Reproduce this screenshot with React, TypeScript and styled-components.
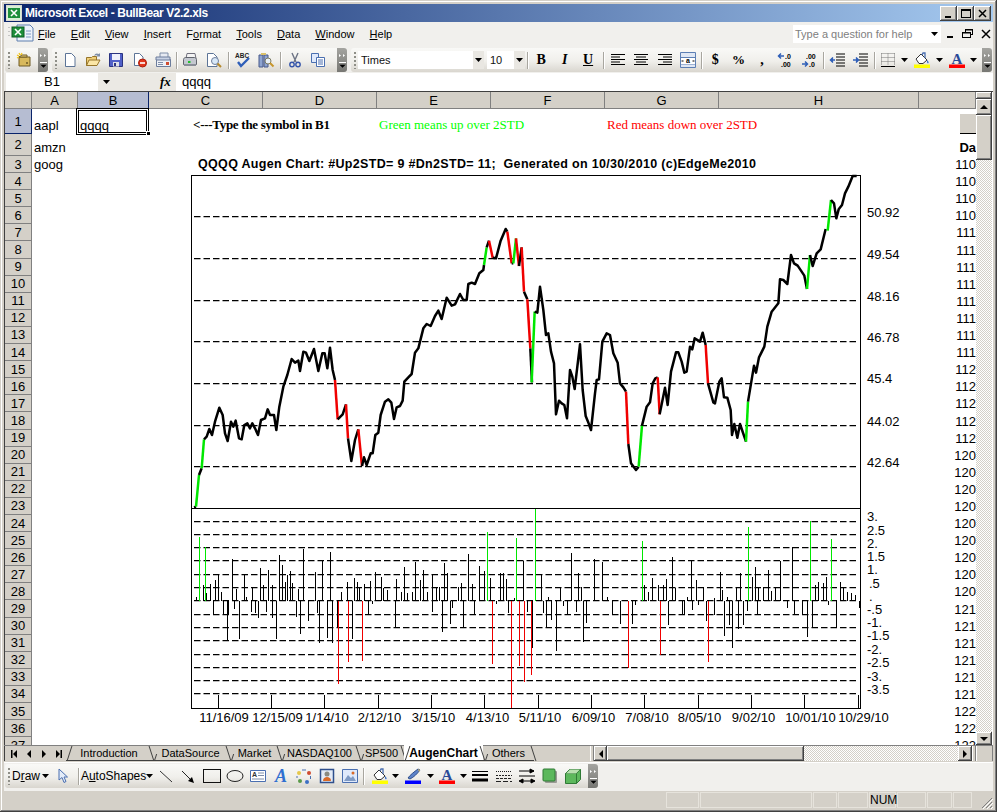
import * as React from 'react';
import styled, { createGlobalStyle } from 'styled-components';

const GlobalStyle = createGlobalStyle`
  html, body {
    margin: 0;
    padding: 0;
    background: #d4d0c8;
  }
  * { box-sizing: border-box; }
`;

const SANS = `"Liberation Sans", Arial, sans-serif`;
const SERIF = `"Liberation Serif", "Times New Roman", serif`;

const Frame = styled.div`
  width: 997px;
  height: 812px;
  padding: 4px 4px 3px 4px;
  display: flex;
  flex-direction: column;
  overflow: hidden;
  background: #d4d0c8;
  font-family: ${SANS};
  box-shadow: inset -1px -1px #404040, inset 1px 1px #d4d0c8, inset -2px -2px #808080, inset 2px 2px #fff;
`;

const TitleBar = styled.div`
  height: 18px;
  flex: none;
  display: flex;
  align-items: center;
  padding: 0 2px;
  background: linear-gradient(90deg, #0a246a, #a6caf0);
  color: #fff;
  font-size: 12px;
  font-weight: bold;
`;

const TitleText = styled.span`
  margin-left: 3px;
  flex: 1;
  letter-spacing: -0.4px;
`;

const WinBtn = styled.button`
  width: 17px;
  height: 15px;
  padding: 0;
  margin: 0;
  display: flex;
  align-items: center;
  justify-content: center;
  background: #d4d0c8;
  border: 0;
  box-shadow: inset -1px -1px #404040, inset 1px 1px #fff, inset -2px -2px #808080;
`;

const MenuBar = styled.div`
  height: 26px;
  flex: none;
  display: flex;
  align-items: center;
  padding-bottom: 2px;
  background: #f1f0ed;
  font-size: 11px;
  color: #000;
`;

const MenuIcon = styled.div`
  width: 34px;
  padding-left: 4px;
  flex: none;
`;

const MenuItems = styled.div`
  display: flex;
  flex: 1;
  gap: 15.1px;
`;

const HelpBox = styled.div`
  width: 148px;
  height: 18px;
  margin-right: 1px;
  display: flex;
  align-items: center;
  justify-content: space-between;
  padding: 0 3px 0 2px;
  background: #fff;
  color: #808080;
  font-size: 11px;
`;

const DocButtons = styled.div`
  width: 51px;
  display: flex;
  justify-content: space-between;
  padding: 0 2px 0 4px;
  align-items: center;
`;

const ToolRow = styled.div`
  height: 25px;
  flex: none;
  display: flex;
  gap: 4px;
  padding-left: 1px;
  background: #f1f0ed;
`;

const Segment = styled.div<{ $w: number }>`
  width: ${(p) => p.$w}px;
  height: 24px;
  flex: none;
  display: flex;
  align-items: center;
  border-radius: 3px;
  background: linear-gradient(#f9f9f7, #f0efeb 55%, #d9d6cf);
`;

const GripBox = styled.div`
  width: 3px;
  height: 17px;
  margin-left: 3px;
  flex: none;
  background: radial-gradient(circle at 1px 1px, #8f8f88 1px, transparent 1.2px) 0 0 / 3px 4px repeat-y;
`;

const Tool = styled.div<{ $w?: number; $pad?: number }>`
  width: ${(p) => p.$w ?? 23.4}px;
  height: 20px;
  flex: none;
  display: flex;
  align-items: center;
  justify-content: center;
  padding-left: ${(p) => p.$pad ?? 0}px;
  font-size: 12px;
  color: #000;
  & > * {
    flex: none;
  }
`;

const Sep = styled.div<{ $m?: number }>`
  width: 1px;
  height: 17px;
  margin: 0 ${(p) => p.$m ?? 1.3}px;
  flex: none;
  background: #a8a69f;
  box-shadow: 1px 0 #fff;
`;

const Spacer = styled.div`
  flex: 1;
`;

const MoreBtn = styled.div`
  width: 10px;
  height: 24px;
  flex: none;
  display: flex;
  align-items: flex-end;
  justify-content: center;
  padding-bottom: 3px;
  border-radius: 0 3px 3px 0;
  background: linear-gradient(#a4a4a0, #777773);
`;

const Combo = styled.div<{ $w: number; $mr: number; $ml?: number }>`
  width: ${(p) => p.$w}px;
  height: 18px;
  margin-left: ${(p) => p.$ml ?? 0}px;
  margin-right: ${(p) => p.$mr}px;
  flex: none;
  display: flex;
  align-items: center;
  justify-content: space-between;
  background: #fff;
  font-size: 11px;
  padding-left: 3px;
  color: #111;
`;

const ComboArrow = styled.div`
  width: 11px;
  height: 18px;
  display: flex;
  align-items: center;
  justify-content: center;
  background: #e9e7e2;
`;

const FormulaBar = styled.div`
  height: 18px;
  flex: none;
  display: flex;
  align-items: stretch;
  background: #ebe9e4;
  font-size: 13px;
`;

const NameBox = styled.div`
  width: 92px;
  margin-left: 2px;
  background: #fff;
  text-align: center;
  line-height: 18px;
`;

const NameArrow = styled.div`
  width: 17px;
  display: flex;
  align-items: center;
  justify-content: center;
`;

const FxLabel = styled.div`
  width: 61px;
  padding-left: 45px;
  font-family: ${SERIF};
  font-style: italic;
  font-weight: bold;
  line-height: 17px;
`;

const FormulaInput = styled.div`
  flex: 1;
  background: #fff;
  padding-left: 6px;
  line-height: 18px;
`;

const SheetArea = styled.div`
  height: 654px;
  flex: none;
  display: flex;
  border-top: 1px solid #404040;
  border-left: 1px solid #404040;
  background: #fff;
`;

const Viewport = styled.div`
  width: 971px;
  position: relative;
  overflow: hidden;
  font-size: 13px;
`;

const SheetRow = styled.div<{ $h: number }>`
  height: ${(p) => p.$h}px;
  display: grid;
  grid-template-columns: 27px 46px 71px 114px 114px 114px 114px 114px 200px 57px;
`;

const HeadCell = styled.div<{ $active?: boolean }>`
  display: flex;
  align-items: center;
  justify-content: center;
  background: ${(p) => (p.$active ? '#b6bdd2' : '#d4d0c8')};
  border-right: 1px solid ${(p) => (p.$active ? '#0a246a' : '#808080')};
  border-bottom: 1px solid ${(p) => (p.$active ? '#0a246a' : '#808080')};
  color: #000;
`;

const Cell = styled.div<{ $indent?: number }>`
  display: flex;
  align-items: flex-end;
  padding-left: ${(p) => p.$indent ?? 2}px;
  line-height: 16px;
  white-space: nowrap;
  color: #000;
`;

const NoteText = styled.span<{ $color?: string; $bold?: boolean }>`
  font-family: ${SERIF};
  font-size: 13px;
  line-height: 18px;
  color: ${(p) => p.$color ?? '#000'};
  font-weight: ${(p) => (p.$bold ? 'bold' : 'normal')};
  letter-spacing: ${(p) => (p.$bold ? '-0.28px' : '0')};
`;

const SelectedCell = styled(Cell)`
  position: relative;
  &::after {
    content: '';
    position: absolute;
    left: -2px;
    top: -1px;
    right: 0;
    bottom: -1px;
    border: 3px double #000;
  }
`;

const FillHandle = styled.div`
  position: absolute;
  right: -2px;
  bottom: -2px;
  width: 5px;
  height: 5px;
  background: #000;
  border: 1px solid #fff;
  z-index: 1;
`;

const DataCell = styled.div<{ $bold?: boolean }>`
  display: flex;
  align-items: flex-end;
  justify-content: flex-end;
  line-height: 16px;
  font-weight: ${(p) => (p.$bold ? 'bold' : 'normal')};
  color: #000;
`;

const ListHeader = styled.div`
  width: 16px;
  height: 20px;
  background: #d4d0c8;
  border-bottom: 1px solid #000;
`;

const ChartSvg = styled.svg`
  position: absolute;
  left: 181px;
  top: 63px;
  width: 720px;
  height: 570px;
  font-family: ${SANS};
`;

const VScroll = styled.div`
  width: 16px;
  flex: none;
  display: flex;
  flex-direction: column;
`;

const ScrollBtn = styled.div<{ $w?: number; $h?: number }>`
  width: ${(p) => (p.$w ? `${p.$w}px` : 'auto')};
  height: ${(p) => (p.$h ? `${p.$h}px` : 'auto')};
  flex: none;
  display: flex;
  align-items: center;
  justify-content: center;
  background: #d4d0c8;
  box-shadow: inset -1px -1px #404040, inset 1px 1px #fff, inset -2px -2px #808080;
`;

const ScrollTrack = styled.div`
  flex: 1;
  background: conic-gradient(#fff 25%, #d4d0c8 0 50%, #fff 0 75%, #d4d0c8 0) 0 0 / 2px 2px;
`;

const TabRow = styled.div`
  height: 16px;
  flex: none;
  display: flex;
  align-items: stretch;
  border-top: 1px solid #808080;
  background: #d4d0c8;
`;

const TabNav = styled.div`
  width: 62px;
  flex: none;
  display: flex;
  align-items: center;
  padding-left: 1px;
  border-left: 1px solid #404040;
`;

const NavBtn = styled.div`
  width: 16px;
  display: flex;
  justify-content: center;
`;

const TabStrip = styled.div`
  width: 524px;
  flex: none;
  display: flex;
`;

const Tab = styled.div<{ $w: number; $active?: boolean; $first?: boolean }>`
  width: ${(p) => p.$w}px;
  flex: none;
  position: relative;
  text-align: center;
  font-size: ${(p) => (p.$active ? 12 : 11)}px;
  line-height: 15px;
  margin-top: -1px;
  height: 16px;
  font-weight: ${(p) => (p.$active ? 'bold' : 'normal')};
  background: ${(p) => (p.$active ? '#fff' : 'transparent')};
  border-bottom: 1px solid #404040;
  border-top: 1px solid ${(p) => (p.$active ? '#fff' : '#808080')};
  color: #000;
  z-index: ${(p) => (p.$active ? 2 : 1)};
  &::before,
  &::after {
    content: '';
    position: absolute;
    bottom: -1px;
    width: 1px;
    background: #404040;
  }
  &::before {
    top: ${(p) => (p.$first || p.$active ? 0 : 8)}px;
    left: 3px;
    transform: skewX(-18deg);
  }
  &::after {
    top: 0;
    right: 0;
    transform: skewX(-342deg) scaleX(1);
  }
`;

const SplitBar = styled.div<{ $w: number }>`
  width: ${(p) => p.$w}px;
  flex: none;
  background: #d4d0c8;
  border-left: 1px solid #fff;
  border-right: 1px solid #808080;
`;

const Thumb = styled(ScrollBtn)`
  flex: none;
`;

const HTrack = styled(ScrollTrack)`
  flex: 1;
`;

const BottomDock = styled.div`
  flex: none;
  height: 29px;
  padding: 1px 0 1px 1px;
  margin-top: 1px;
  border-top: 1px solid #fff;
  background: #f1f0ed;
  display: flex;
`;

const StatusBar = styled.div`
  flex: 1;
  display: flex;
  justify-content: flex-end;
  align-items: center;
  gap: 1px;
  padding-right: 21px;
  padding-bottom: 1px;
  position: relative;
`;

const StatusPanel = styled.div<{ $w: number }>`
  width: ${(p) => p.$w}px;
  height: 16px;
  border: 1px solid #e6e3dc;
  font-size: 12px;
  line-height: 15px;
  text-align: center;
  color: #000;
`;

const SizeGrip = styled.svg`
  position: absolute;
  right: 0;
  bottom: 0;
`;

const Glyph = styled.svg`
  width: 16px;
  height: 16px;
  display: block;
  overflow: visible;
`;

const SymbolText = styled.span<{ $style?: string; $size?: number; $line?: boolean }>`
  font-family: ${SERIF};
  font-weight: bold;
  font-size: ${(p) => p.$size ?? 14}px;
  font-style: ${(p) => p.$style ?? 'normal'};
  text-decoration: ${(p) => (p.$line ? 'underline' : 'none')};
`;

const Ico = ({ children }: { children: React.ReactNode }) => (
  <Glyph viewBox="0 0 16 16">{children}</Glyph>
);

const DownArrow = () => (
  <svg width="7" height="4" viewBox="0 0 7 4"><path d="M0 0h7L3.5 4z" fill="#000" /></svg>
);

const Page = ({ x = 3, y = 1, w = 10, h = 14 }: { x?: number; y?: number; w?: number; h?: number }) => (
  <path
    d={`M${x + 0.5} ${y + 0.5}h${w - 4}l3.5 3.5V${y + h - 0.5}H${x + 0.5}z`}
    fill="#fff"
    stroke="#5c7497"
  />
);

const Lines = ({ rows }: { rows: [number, number][] }) => (
  <g stroke="#000" strokeWidth="1">
    {rows.map(([x, w], i) => (
      <path key={i} d={`M${x} ${2.5 + i * 2.5}h${w}`} />
    ))}
  </g>
);

const icons = {
  excel: (
    <svg width="26" height="18" viewBox="0 0 26 18">
      <path d="M9 1h13l3 3v13H9z" fill="#eef3fb" stroke="#5f7fae" />
      <rect x="4" y="3" width="12" height="10" fill="#1e8f3b" stroke="#0d5a24" />
      <path d="M7 5l6 6M13 5l-6 6" stroke="#fff" strokeWidth="1.6" />
      <path d="M18 7h5M18 10h5M18 13h5" stroke="#7f9ac4" />
      <path d="M1 3v1M1 7v1M1 11v1" stroke="#999" />
    </svg>
  ),
  titleLogo: (
    <svg width="16" height="16" viewBox="0 0 16 16">
      <rect x="0.5" y="0.5" width="15" height="15" fill="#d9f0d6" stroke="#d8d8d0" />
      <rect x="2" y="3" width="12" height="10" fill="#1e8f3b" />
      <path d="M5 5l6 6M11 5l-6 6" stroke="#fff" strokeWidth="1.6" />
    </svg>
  ),
  fresh: (
    <Ico>
      <path d="M3 5h11v9H3z" fill="#d8b95c" stroke="#6e5a24" />
      <path d="M3 5l3-2h5v2z" fill="#e9d184" stroke="#6e5a24" />
      <path d="M3 1l1 2M1 3l2 1M6 1L5 3M1 6l2-1" stroke="#f2c318" strokeWidth="1.3" />
      <circle cx="11" cy="11" r="1" fill="#6e5a24" />
    </Ico>
  ),
  newDoc: <Ico><Page /></Ico>,
  open: (
    <Ico>
      <path d="M1.5 13.5V5.5h5l1-1h4v9z" fill="#f0cf78" stroke="#96752a" />
      <path d="M1.5 13.5L4 8h11l-3 5.5z" fill="#fbe6a6" stroke="#96752a" />
      <path d="M9 4c1-3 3-3 5-2l1-1v3.500h-3.500l1-1c-1-.5-2.500-.5-3.500.5z" fill="#7f8fa8" />
    </Ico>
  ),
  save: (
    <Ico>
      <path d="M1.500 1.500h13v13h-13z" fill="#5060c8" stroke="#2a3380" />
      <rect x="4" y="2" width="8" height="6" fill="#eef0fb" />
      <rect x="5" y="10" width="6" height="4.500" fill="#dfe0e8" />
      <rect x="6" y="11" width="2" height="3" fill="#2a3380" />
    </Ico>
  ),
  permission: (
    <Ico>
      <Page x={2} w={9} h={13} />
      <circle cx="10.500" cy="11" r="4" fill="#e2361c" stroke="#a81e0c" />
      <path d="M8 11h5" stroke="#fff" strokeWidth="1.600" />
    </Ico>
  ),
  mail: (
    <Ico>
      <path d="M5 1h8v6H5z" fill="#e6eaf2" stroke="#7f8ea8" />
      <path d="M1.500 7.500h14v7h-14z" fill="#eef1f7" stroke="#6c7d9c" />
      <path d="M1 5h14v3H1z" fill="#c8d2e4" stroke="#6c7d9c" />
      <path d="M3 10.500h5M3 12.500h5" stroke="#7f8ea8" />
      <rect x="11" y="10" width="3" height="3" fill="#d04c30" />
    </Ico>
  ),
  print: (
    <Ico>
      <path d="M5 1.500h8l1 5H4z" fill="#f4f4f4" stroke="#70707c" />
      <path d="M1.500 7.500c0-1 1-2 2-2h9c1 0 2 1 2 2v5h-13z" fill="#c4c8d0" stroke="#60646c" />
      <path d="M2 12h12v2H2z" fill="#8a8e98" />
      <rect x="6" y="9" width="2.500" height="2" fill="#22c02e" />
    </Ico>
  ),
  preview: (
    <Ico>
      <Page x={1} w={10} h={14} />
      <circle cx="9" cy="9" r="3.500" fill="#d8e8f8" stroke="#6c7d9c" />
      <path d="M11.500 11.500l3.500 3.500" stroke="#b58a2c" strokeWidth="2" />
    </Ico>
  ),
  spell: (
    <Ico>
      <text x="0" y="6" fontFamily={SANS} fontSize="6.500" fontWeight="bold" fill="#222">ABC</text>
      <path d="M3 10l3 4 8-8" fill="none" stroke="#2f5fb8" strokeWidth="2.400" />
    </Ico>
  ),
  research: (
    <Ico>
      <path d="M1 3h4v12H1zM6 3h4v12H6z" fill="#8ea4d0" stroke="#47598a" />
      <path d="M3 1h5v2H3z" fill="#d9c06a" />
      <circle cx="10" cy="9" r="3" fill="#e8f0f8" stroke="#7a7a62" />
      <path d="M12 11l3.500 3.500" stroke="#c7962c" strokeWidth="2" />
    </Ico>
  ),
  cut: (
    <Ico>
      <path d="M5 1l4 9M11 1L7 10" stroke="#6c7384" strokeWidth="1.400" fill="none" />
      <circle cx="5" cy="12.500" r="2.200" fill="none" stroke="#3555aa" strokeWidth="1.400" />
      <circle cx="11" cy="12.500" r="2.200" fill="none" stroke="#3555aa" strokeWidth="1.400" />
    </Ico>
  ),
  copy: (
    <Ico>
      <path d="M1.500 1.500h7v9h-7z" fill="#dfe9fb" stroke="#4a6fb0" />
      <path d="M6.500 5.500h8v9h-8z" fill="#fff" stroke="#4a6fb0" />
      <path d="M8 8h5M8 10h5M8 12h5" stroke="#4a6fb0" />
    </Ico>
  ),
  alignLeft: <Ico><Lines rows={[[1, 14], [1, 9], [1, 14], [1, 9], [1, 14]]} /></Ico>,
  alignCenter: <Ico><Lines rows={[[1, 14], [3, 10], [1, 14], [3, 10], [1, 14]]} /></Ico>,
  alignRight: <Ico><Lines rows={[[1, 14], [6, 9], [1, 14], [6, 9], [1, 14]]} /></Ico>,
  merge: (
    <Ico>
      <path d="M.500 .500h15v15H.500z" fill="#dfe7f4" stroke="#5c7fb4" />
      <path d="M.500 5.500h15M.500 12h15" stroke="#5c7fb4" />
      <rect x="1" y="6" width="14" height="6" fill="#fff" />
      <text x="8" y="11.300" textAnchor="middle" fontFamily={SANS} fontSize="7" fontWeight="bold">a</text>
      <path d="M1.500 9h2M14.500 9h-2" stroke="#000" />
    </Ico>
  ),
  incDec: (
    <Ico>
      <text x="8" y="7" fontFamily={SANS} fontSize="7" fontWeight="bold">.0</text>
      <text x="4" y="15" fontFamily={SANS} fontSize="7" fontWeight="bold">.00</text>
      <path d="M7 4H2M4 1.500L1.500 4 4 6.500" stroke="#2f5fb8" strokeWidth="1.500" fill="none" />
    </Ico>
  ),
  decDec: (
    <Ico>
      <text x="5" y="7" fontFamily={SANS} fontSize="7" fontWeight="bold">.00</text>
      <text x="8" y="15" fontFamily={SANS} fontSize="7" fontWeight="bold">.0</text>
      <path d="M1 12h5M4 9.500L6.500 12 4 14.500" stroke="#2f5fb8" strokeWidth="1.500" fill="none" />
    </Ico>
  ),
  outdent: (
    <Ico>
      <path d="M6 2h9M6 5h9M6 8h9M6 11h9M6 14h9" stroke="#000" />
      <path d="M5 8H1M3 5.500L.500 8 3 10.500" stroke="#2f5fb8" strokeWidth="1.500" fill="#2f5fb8" />
    </Ico>
  ),
  indent: (
    <Ico>
      <path d="M6 2h9M6 5h9M6 8h9M6 11h9M6 14h9" stroke="#000" />
      <path d="M0 8h4M3 5.500L5.500 8 3 10.500" stroke="#2f5fb8" strokeWidth="1.500" fill="#2f5fb8" />
    </Ico>
  ),
  borders: (
    <Ico>
      <path d="M1.500 1.500h13M1.500 5.500h13M1.500 9.500h13M1.500 1.500v12M8 1.500v12M14.500 1.500v12" stroke="#777" strokeDasharray="1 1" />
      <path d="M1 14.500h14" stroke="#000" />
    </Ico>
  ),
  fill: (
    <Ico>
      <path d="M2 7l5-5 6 6-4 3.500H5z" fill="#fff" stroke="#333" />
      <path d="M8 3l1-2 2 0v5" fill="none" stroke="#4a6fb0" strokeWidth="1.300" />
      <path d="M13 8c1 1 2 2 1.500 3-.5.800-2 .3-1.500-3z" fill="#3b6fc4" />
      <rect x="0" y="12.500" width="16" height="3.500" fill="#ffff00" />
    </Ico>
  ),
  pen: (
    <Ico>
      <path d="M3 10c2-3 6-6 10-9l2 1c-3 4-6 7-10 9z" fill="#5c82c8" stroke="#2f4f8c" />
      <path d="M13 1l2 1-1 2z" fill="#d8b95c" />
      <rect x="0" y="12.500" width="16" height="3.500" fill="#0000ff" />
    </Ico>
  ),
  fontColor: (
    <Ico>
      <text x="8" y="11.500" textAnchor="middle" fontFamily={SERIF} fontSize="15" fontWeight="bold" fill="#2a4a98">A</text>
      <rect x="0" y="12.500" width="16" height="3.500" fill="#ff0000" />
    </Ico>
  ),
  pointer: (
    <Ico>
      <path d="M4 1v11l3-2.500 2 5 2-1-2-4.500h3.500z" fill="#e3ecf9" stroke="#4a6fb0" />
    </Ico>
  ),
  line: <Ico><path d="M2 3l12 11" stroke="#333" /></Ico>,
  arrow: <Ico><path d="M2 3l10 10" stroke="#222" /><path d="M14 15l-6-2 4-4z" fill="#000" /></Ico>,
  rect: <Ico><rect x="-.500" y="1.500" width="17" height="13" fill="none" stroke="#111" /></Ico>,
  ellipse: <Ico><ellipse cx="8" cy="8" rx="8" ry="5.500" fill="none" stroke="#222" /></Ico>,
  textBox: (
    <Ico>
      <path d="M.500 2.500h15v11H.500z" fill="#fff" stroke="#4a6fb0" />
      <text x="2" y="9" fontFamily={SANS} fontSize="7" fontWeight="bold" fill="#333">A</text>
      <path d="M8 5h6M8 7.500h6M2 11h12" stroke="#7f8ea8" />
    </Ico>
  ),
  wordArt: (
    <Ico>
      <text x="8" y="14" textAnchor="middle" fontFamily={SERIF} fontSize="18" fontStyle="italic" fontWeight="bold" fill="#2f6fd0">A</text>
    </Ico>
  ),
  diagram: (
    <Ico>
      <circle cx="3" cy="5" r="2" fill="#e6c84a" />
      <circle cx="13" cy="5" r="2" fill="#d04c30" />
      <circle cx="4" cy="13" r="2" fill="#5a9a48" />
      <circle cx="11" cy="14" r="2" fill="#3b6fc4" />
      <path d="M6 2h4M14.500 8v3M1 8v2" stroke="#4a6fb0" />
    </Ico>
  ),
  clipArt: (
    <Ico>
      <path d="M1.500 1.500h13v13h-13z" fill="#e4ebf6" stroke="#2f4f8c" strokeWidth="1.500" />
      <circle cx="8" cy="6" r="2.500" fill="#8a8a80" />
      <path d="M4 13c0-3 2-4 4-4s4 1 4 4z" fill="#d96a28" />
    </Ico>
  ),
  picture: (
    <Ico>
      <path d="M.500 1.500h15v13H.500z" fill="#dfe9fb" stroke="#4a6fb0" />
      <path d="M2 13l4-6 3 3 2-2 3 5z" fill="#7f9ac4" />
      <circle cx="11" cy="5" r="1.500" fill="#d96a28" />
    </Ico>
  ),
  lineStyle: <Ico><path d="M0 3.500h16" stroke="#000" /><path d="M0 7h16" stroke="#000" strokeWidth="2" /><path d="M0 12h16" stroke="#000" strokeWidth="3" /></Ico>,
  dashStyle: (
    <Ico>
      <path d="M0 3.500h16" stroke="#222" strokeDasharray="1 1" />
      <path d="M0 7.500h16" stroke="#222" strokeDasharray="2 1" />
      <path d="M0 10.500h16" stroke="#222" strokeDasharray="3 1" />
      <path d="M0 13.500h16" stroke="#222" strokeDasharray="5 2" />
    </Ico>
  ),
  arrowStyle: (
    <Ico>
      <path d="M0 3h15M11 1l4 2-4 2z" stroke="#000" />
      <path d="M0 8h16" stroke="#000" />
      <path d="M1 13h14M4 11l-4 2 4 2zM12 11l4 2-4 2z" stroke="#000" />
    </Ico>
  ),
  shadow: (
    <Ico>
      <rect x="3" y="3" width="12" height="12" rx="1" fill="#9a9a94" />
      <rect x="1" y="1" width="12" height="12" rx="1" fill="#5cb85c" stroke="#2f7a35" />
    </Ico>
  ),
  cube: (
    <Ico>
      <path d="M.500 5.500l4-4h11v10l-4 4H.500z" fill="#5cb85c" stroke="#2f7a35" />
      <path d="M.500 5.500h11v10M11.500 5.500l4-4" fill="none" stroke="#2f7a35" />
      <path d="M1 5.500l4-4h10l-4 4z" fill="#b8e0b0" />
    </Ico>
  ),
};

const MoreGlyph = () => (
  <svg width="7" height="16" viewBox="0 0 7 16">
    <path d="M0 1l2 1.500L0 4zM4 1l2 1.500L4 4z" fill="#fff" />
    <path d="M0 9h7v1H0zM0 11.500h7L3.500 15z" fill="#fff" />
    <path d="M0 11.500h7L3.500 15z" fill="#000" />
  </svg>
);

/* price line: runs traced off the picture, x/y in picture pixels */
type Run = { c: string; pts: [number, number][] };

const fromLeft = (p: number[]) => p.reduce<[number, number][]>((acc, v, i) => {
  if (i % 2 === 0) acc.push([190 + v / 3, 170 + p[i + 1] / 3]);
  return acc;
}, []);
const fromRight = (p: number[]) => p.reduce<[number, number][]>((acc, v, i) => {
  if (i % 2 === 0) acc.push([530 + v / 3, 170 + p[i + 1] / 3]);
  return acc;
}, []);

const G = '#00e800';
const R = '#f00000';
const K = '#000';

const priceRuns: Run[] = [
  { c: K, pts: fromLeft([12, 1012, 18, 1010]) },
  { c: G, pts: fromLeft([18, 1010, 27, 915]) },
  { c: K, pts: fromLeft([27, 915, 35, 895]) },
  { c: G, pts: fromLeft([35, 895, 42, 808]) },
  { c: K, pts: fromLeft([42, 808, 50, 800, 58, 777, 66, 795, 75, 755, 88, 713, 98, 735, 105, 790, 113, 813, 123, 755, 130, 770, 137, 752, 147, 805, 155, 808, 163, 765, 172, 760, 180, 775, 187, 760, 195, 775, 204, 795, 213, 750, 225, 745, 233, 718, 240, 735, 252, 735, 259, 780, 268, 710, 280, 650, 292, 615, 305, 567, 315, 578, 325, 572, 330, 603, 340, 545, 348, 548, 358, 573, 372, 537, 385, 603, 397, 550, 404, 550, 412, 595, 420, 533, 428, 600, 435, 630]) },
  { c: R, pts: fromLeft([435, 630, 443, 748]) },
  { c: K, pts: fromLeft([443, 748, 458, 733, 468, 703]) },
  { c: R, pts: fromLeft([468, 703, 474, 805]) },
  { c: K, pts: fromLeft([474, 805, 484, 873, 495, 810, 505, 778]) },
  { c: R, pts: fromLeft([505, 778, 516, 888]) },
  { c: K, pts: fromLeft([516, 888, 522, 862, 530, 885, 542, 850, 548, 850, 556, 795, 565, 788, 572, 735, 585, 695, 595, 688, 604, 698, 612, 747, 620, 712, 630, 708, 638, 692, 643, 635, 655, 622, 665, 612, 675, 548, 685, 535, 700, 475, 710, 462, 722, 468, 735, 438, 745, 422, 755, 447, 770, 383, 785, 407, 795, 403, 810, 372, 820, 390, 830, 390, 835, 342, 845, 338, 855, 342, 868, 310, 880, 300, 882, 285]) },
  { c: G, pts: fromLeft([882, 285, 890, 232]) },
  { c: K, pts: fromLeft([890, 232, 897, 212]) },
  { c: R, pts: fromLeft([897, 212, 908, 263]) },
  { c: K, pts: fromLeft([908, 263, 918, 265, 932, 212, 947, 177, 952, 185]) },
  { c: R, pts: fromLeft([952, 185, 965, 280]) },
  { c: K, pts: fromLeft([965, 280, 970, 280]) },
  { c: G, pts: fromLeft([970, 280, 978, 205]) },
  { c: R, pts: fromLeft([978, 205, 987, 288]) },
  { c: K, pts: fromLeft([987, 288, 995, 232]) },
  { c: R, pts: fromLeft([995, 232, 1002, 365]) },
  { c: K, pts: fromLeft([1002, 365, 1012, 388]) },
  { c: R, pts: fromLeft([1012, 388, 1021, 535]) },
  { c: K, pts: fromLeft([1021, 535, 1026, 637]) },
  { c: G, pts: fromRight([5, 637, 14, 425]) },
  { c: K, pts: fromRight([14, 425, 22, 428, 30, 350, 40, 420, 48, 495, 55, 490, 63, 545, 72, 580, 78, 733, 87, 692, 95, 700, 103, 705, 111, 745, 120, 600, 127, 620, 134, 657, 150, 523, 158, 660, 167, 738, 174, 755, 183, 780, 195, 670, 200, 630, 207, 628, 217, 515, 230, 490, 240, 495, 250, 550, 263, 578, 270, 640, 280, 652, 288, 665]) },
  { c: R, pts: fromRight([288, 665, 295, 822]) },
  { c: K, pts: fromRight([295, 822, 303, 880, 318, 900, 326, 890]) },
  { c: G, pts: fromRight([326, 890, 336, 767]) },
  { c: K, pts: fromRight([336, 767, 350, 710, 360, 697, 368, 640, 376, 625, 383, 622]) },
  { c: R, pts: fromRight([383, 622, 389, 733]) },
  { c: K, pts: fromRight([389, 733, 405, 653, 413, 705, 423, 605, 438, 547, 445, 547, 455, 575, 463, 608, 470, 605, 480, 530, 487, 538, 494, 505, 510, 515, 518, 488, 527, 525]) },
  { c: R, pts: fromRight([527, 525, 534, 640]) },
  { c: K, pts: fromRight([534, 640, 550, 697, 555, 700, 568, 635, 575, 625, 582, 682, 592, 683, 602, 720, 606, 795, 613, 762, 622, 803, 630, 762, 648, 815]) },
  { c: G, pts: fromRight([648, 815, 654, 695]) },
  { c: K, pts: fromRight([654, 695, 672, 587, 678, 608, 687, 562, 703, 530, 712, 470, 725, 425, 745, 400, 750, 328, 760, 330, 772, 342, 783, 255, 792, 280, 803, 287, 823, 317, 831, 357]) },
  { c: G, pts: fromRight([831, 357, 840, 255]) },
  { c: K, pts: fromRight([840, 255, 848, 288, 860, 250, 872, 238, 887, 177]) },
  { c: G, pts: fromRight([893, 182, 903, 90]) },
  { c: K, pts: fromRight([903, 90, 912, 100, 919, 145, 926, 118, 936, 105, 945, 70, 955, 50, 968, 18, 980, 18]) },
];

/* volume bars as pairs of x, end y, read from the left and right crops */
const blackLeft = [18, 275, 38, 240, 48, 265, 61, 238, 76, 225, 85, 208, 92, 262, 125, 163, 139, 253, 163, 208, 168, 275, 187, 248, 211, 190, 220, 240, 235, 195, 246, 240, 268, 150, 276, 180, 284, 232, 292, 210, 300, 197, 306, 235, 325, 252, 340, 133, 375, 200, 397, 168, 420, 142, 452, 262, 470, 230, 493, 218, 500, 232, 508, 250, 523, 238, 541, 228, 556, 202, 572, 215, 580, 250, 590, 255, 618, 222, 634, 260, 643, 185, 652, 265, 667, 262, 676, 170, 690, 225, 700, 195, 712, 262, 727, 210, 738, 250, 748, 245, 763, 175, 772, 205, 805, 245, 812, 235, 835, 148, 845, 238, 868, 183, 882, 197, 901, 218, 930, 205, 938, 205, 948, 222, 972, 280, 998, 168, 68, 330, 100, 327, 110, 407, 115, 327, 133, 312, 148, 403, 182, 322, 195, 325, 205, 340, 229, 320, 245, 340, 259, 403, 317, 335, 331, 388, 355, 347, 380, 325, 388, 415, 412, 398, 427, 415, 440, 367, 485, 402, 533, 330, 547, 298, 614, 370, 725, 320, 757, 380, 781, 358, 787, 308, 820, 365, 853, 327, 917, 297, 955, 323, 1012, 322, 1027, 428];
const redLeft = [445, 538, 475, 472, 517, 467, 907, 478, 964, 610, 988, 482, 1003, 532, 1022, 510];
const greenLeft = [28, 97, 44, 125, 892, 80, 979, 100, 1036, 10];
const blackRight = [33, 208, 55, 275, 90, 245, 122, 145, 145, 203, 152, 245, 193, 163, 217, 172, 232, 275, 343, 240, 354, 262, 367, 218, 384, 240, 400, 240, 409, 222, 425, 157, 435, 250, 472, 275, 482, 167, 497, 225, 520, 245, 553, 280, 569, 202, 576, 255, 592, 277, 617, 248, 630, 203, 665, 215, 674, 187, 685, 245, 700, 247, 713, 195, 722, 258, 735, 250, 751, 167, 785, 127, 855, 240, 863, 230, 878, 235, 888, 215, 930, 230, 940, 245, 952, 260, 964, 265, 976, 270, 39, 323, 47, 365, 63, 345, 79, 437, 98, 302, 112, 328, 138, 322, 160, 410, 169, 353, 247, 328, 271, 358, 305, 358, 315, 300, 415, 360, 457, 330, 463, 330, 487, 315, 505, 300, 529, 347, 553, 330, 583, 392, 597, 360, 607, 430, 624, 373, 640, 360, 650, 318, 680, 328, 771, 308, 792, 330, 816, 330, 832, 395, 847, 367, 895, 300, 919, 365, 987, 308];
const redRight = [295, 490, 391, 450, 535, 472];
const greenRight = [337, 108, 655, 67, 841, 47, 904, 103];

const ZERO = 600.5;
const barPath = (pairs: number[], originX: number) => {
  let d = '';
  for (let i = 0; i < pairs.length; i += 2) {
    const x = Math.round(originX + pairs[i] / 3) + 0.5;
    d += `M${x} ${ZERO}V${505 + pairs[i + 1] / 3}`;
  }
  return d;
};

const upperGrid = [216.7, 258.7, 300.7, 341.7, 383.7, 425.7, 466.7];
const upperLabels: [string, number][] = [['50.92', 212], ['49.54', 254], ['48.16', 296], ['46.78', 337], ['45.4', 378], ['44.02', 421], ['42.64', 462]];
const lowerGrid = [521.7, 534.7, 547.7, 560.7, 574.7, 587.7, 600.7, 614.7, 627.7, 640.7, 654.7, 667.7, 680.7, 693.7];
const lowerLabels: [string, number, number][] = [['3.', 516, 867], ['2.5', 530, 867], ['2.', 543, 867], ['1.5', 556, 867], ['1.', 569, 867], ['.5', 583, 869], ['.', 596, 869], ['-.5', 609, 867], ['-1.', 622, 867], ['-1.5', 635, 867], ['-2.', 649, 867], ['-2.5', 662, 867], ['-3.', 676, 867], ['-3.5', 689, 867]];
const ticks = [218, 271, 324, 378, 431, 484, 538, 591, 644, 698, 751, 804, 858];
const dates: [string, number][] = [['11/16/09', 224], ['12/15/09', 277.5], ['1/14/10', 327], ['2/12/10', 379.5], ['3/15/10', 433.5], ['4/13/10', 487.5], ['5/11/10', 540], ['6/09/10', 593.5], ['7/08/10', 647], ['8/05/10', 699.5], ['9/02/10', 753.5], ['10/01/10', 810.5], ['10/29/10', 863.5]];

function AugenChart() {
  return (
    <ChartSvg viewBox="186 155 720 570">
      <text x="198" y="168" fontSize="12.500" fontWeight="bold" textLength="558" style={{ whiteSpace: 'pre' }}>
        QQQQ Augen Chart: #Up2STD= 9 #Dn2STD= 11;  Generated on 10/30/2010 (c)EdgeMe2010
      </text>
      <g stroke="#000" strokeWidth="1.200" strokeDasharray="6.500 3" fill="none">
        {upperGrid.concat(lowerGrid).map((y) => (
          <path key={y} d={`M194 ${y}H859`} />
        ))}
      </g>
      <g fill="none" shapeRendering="crispEdges">
        <path d={barPath(blackLeft, 190) + barPath(blackRight, 530)} stroke="#000" />
        <path d={barPath(redLeft, 190) + barPath(redRight, 530)} stroke="#f00000" />
        <path d={barPath(greenLeft, 190) + barPath(greenRight, 530)} stroke="#00e800" />
        <path d={ticks.map((x) => `M${x + 0.5} 695V708`).join('')} stroke="#000" />
        <path d="M191.500 175.500H860.500V708.500H191.500zM191.500 508.500H860.500" stroke="#000" />
      </g>
      <g fill="none" strokeWidth="2.500" strokeLinejoin="round" strokeLinecap="butt">
        {priceRuns.map((run, i) => (
          <polyline key={i} stroke={run.c} points={run.pts.map((p) => p.join(',')).join(' ')} />
        ))}
      </g>
      <g fontSize="13" fill="#000">
        {upperLabels.map(([t, y]) => (
          <text key={t} x="867" y={y + 4.5}>{t}</text>
        ))}
        {lowerLabels.map(([t, y, x]) => (
          <text key={t} x={x} y={y + 5}>{t}</text>
        ))}
        {dates.map(([t, x]) => (
          <text key={t} x={x} y="722" textAnchor="middle">{t}</text>
        ))}
      </g>
    </ChartSvg>
  );
}

const columns = ['A', 'B', 'C', 'D', 'E', 'F', 'G', 'H', ''];

const sideValue = (n: number) => {
  if (n <= 6) return '110';
  if (n <= 14) return '111';
  if (n <= 19) return '112';
  if (n <= 28) return '120';
  if (n <= 34) return '121';
  return '122';
};

const menus: [string, string][] = [['F', 'ile'], ['E', 'dit'], ['V', 'iew'], ['I', 'nsert'], ['', 'Format'], ['T', 'ools'], ['D', 'ata'], ['W', 'indow'], ['H', 'elp']];
const sheetTabs: [string, number][] = [['Introduction', 86], ['DataSource', 77], ['Market', 51], ['NASDAQ100', 79], ['SP500', 45], ['AugenChart', 79], ['Others', 51]];

const Triangle = ({ d }: { d: string }) => (
  <svg width="8" height="8" viewBox="0 0 8 8"><path d={d} fill="#000" /></svg>
);

export default function App() {
  const lowRows = Array.from({ length: 35 }, (_, i) => i + 3);
  return (
    <Frame>
      <GlobalStyle />
      <TitleBar>
        {icons.titleLogo}
        <TitleText>Microsoft Excel - BullBear V2.2.xls</TitleText>
        <WinBtn><svg width="9" height="9"><path d="M1 7h6v2H1z" /></svg></WinBtn>
        <WinBtn><svg width="10" height="9"><path d="M0 0h10v9H0zM1 2v6h8V2z" /></svg></WinBtn>
        <WinBtn><svg width="9" height="9"><path d="M1 1l7 7M8 1L1 8" stroke="#000" strokeWidth="1.500" /></svg></WinBtn>
      </TitleBar>

      <MenuBar>
        <MenuIcon>{icons.excel}</MenuIcon>
        <MenuItems>
          {menus.map(([key, rest]) => (
            <span key={key + rest}>
              {key ? <u>{key}</u> : <>F<u>o</u>rmat</>}
              {key ? rest : ''}
            </span>
          ))}
        </MenuItems>
        <HelpBox>
          Type a question for help
          <DownArrow />
        </HelpBox>
        <DocButtons>
          <svg width="8" height="8"><path d="M1 6h6v2H1z" /></svg>
          <svg width="11" height="10" viewBox="0 0 11 10"><path d="M3 0h8v6H9v3H0V3h3zM4 1.500V3h5v2h1V1.500zM1 4.500V8h7V4.500z" /></svg>
          <svg width="10" height="10"><path d="M1 1l8 8M9 1L1 9" stroke="#000" strokeWidth="1.500" /></svg>
        </DocButtons>
      </MenuBar>

      <ToolRow>
        <Segment $w={43}>
          <GripBox />
          <Tool $w={26}>{icons.fresh}</Tool>
          <Spacer />
          <MoreBtn><MoreGlyph /></MoreBtn>
        </Segment>
        <Segment $w={295}>
          <GripBox />
          <Tool>{icons.newDoc}</Tool>
          <Tool>{icons.open}</Tool>
          <Tool>{icons.save}</Tool>
          <Tool>{icons.permission}</Tool>
          <Tool>{icons.mail}</Tool>
          <Sep />
          <Tool>{icons.print}</Tool>
          <Tool>{icons.preview}</Tool>
          <Sep $m={2.3} />
          <Tool>{icons.spell}</Tool>
          <Tool>{icons.research}</Tool>
          <Sep $m={2.3} />
          <Tool>{icons.cut}</Tool>
          <Tool>{icons.copy}</Tool>
          <Spacer />
          <MoreBtn><MoreGlyph /></MoreBtn>
        </Segment>
        <Segment $w={641}>
          <GripBox />
          <Combo $w={126} $ml={1} $mr={3}>Times<ComboArrow><DownArrow /></ComboArrow></Combo>
          <Combo $w={38} $mr={1}>10<ComboArrow><DownArrow /></ComboArrow></Combo>
          <Sep />
          <Tool><SymbolText>B</SymbolText></Tool>
          <Tool><SymbolText $style="italic">I</SymbolText></Tool>
          <Tool><SymbolText $line>U</SymbolText></Tool>
          <Sep $m={2.8} />
          <Tool>{icons.alignLeft}</Tool>
          <Tool>{icons.alignCenter}</Tool>
          <Tool>{icons.alignRight}</Tool>
          <Tool>{icons.merge}</Tool>
          <Sep />
          <Tool><SymbolText>$</SymbolText></Tool>
          <Tool><SymbolText $size={13}>%</SymbolText></Tool>
          <Tool><SymbolText>,</SymbolText></Tool>
          <Tool>{icons.incDec}</Tool>
          <Tool>{icons.decDec}</Tool>
          <Sep $m={2.3} />
          <Tool>{icons.outdent}</Tool>
          <Tool>{icons.indent}</Tool>
          <Sep />
          <Tool $w={24}>{icons.borders}</Tool>
          <Tool $w={9}><DownArrow /></Tool>
          <Tool $w={26}>{icons.fill}</Tool>
          <Tool $w={8}><DownArrow /></Tool>
          <Tool $w={28}>{icons.fontColor}</Tool>
          <Tool $w={4}><DownArrow /></Tool>
          <Spacer />
          <MoreBtn><MoreGlyph /></MoreBtn>
        </Segment>
      </ToolRow>

      <FormulaBar>
        <NameBox>B1</NameBox>
        <NameArrow><DownArrow /></NameArrow>
        <FxLabel>fx</FxLabel>
        <FormulaInput>qqqq</FormulaInput>
      </FormulaBar>

      <SheetArea>
        <Viewport>
          <SheetRow $h={17}>
            <HeadCell />
            {columns.map((c) => (
              <HeadCell key={c} $active={c === 'B'}>{c}</HeadCell>
            ))}
          </SheetRow>
          <SheetRow $h={25}>
            <HeadCell $active>1</HeadCell>
            <Cell>aapl</Cell>
            <SelectedCell>qqqq<FillHandle /></SelectedCell>
            <Cell $indent={44}><NoteText $bold>&lt;---Type the symbol in B1</NoteText></Cell>
            <Cell />
            <Cell><NoteText $color="#00ff00">Green means up over 2STD</NoteText></Cell>
            <Cell />
            <Cell><NoteText $color="#ff0000">Red means down over 2STD</NoteText></Cell>
            <Cell />
            <DataCell><ListHeader /></DataCell>
          </SheetRow>
          <SheetRow $h={22}>
            <HeadCell>2</HeadCell>
            <Cell>amzn</Cell>
            <Cell /><Cell /><Cell /><Cell /><Cell /><Cell /><Cell />
            <DataCell $bold>Da</DataCell>
          </SheetRow>
          {lowRows.map((n) => (
            <SheetRow key={n} $h={17.1}>
              <HeadCell>{n}</HeadCell>
              <Cell>{n === 3 ? 'goog' : ''}</Cell>
              <Cell /><Cell /><Cell /><Cell /><Cell /><Cell /><Cell />
              <DataCell>{sideValue(n)}</DataCell>
            </SheetRow>
          ))}
          <AugenChart />
        </Viewport>
        <VScroll>
          <ScrollBtn $h={7} />
          <ScrollBtn $h={16}><Triangle d="M4 2l4 4H0z" /></ScrollBtn>
          <Thumb $h={45} />
          <ScrollTrack />
          <ScrollBtn $h={13}><Triangle d="M0 2h8L4 6z" /></ScrollBtn>
        </VScroll>
      </SheetArea>

      <TabRow>
        <TabNav>
          <NavBtn><Triangle d="M1 0v8h1.500V0zM7 0L3 4l4 4z" /></NavBtn>
          <NavBtn><Triangle d="M6 0L2 4l4 4z" /></NavBtn>
          <NavBtn><Triangle d="M2 0l4 4-4 4z" /></NavBtn>
          <NavBtn><Triangle d="M1 0l4 4-4 4zM5.500 0v8H7V0z" /></NavBtn>
        </TabNav>
        <TabStrip>
          {sheetTabs.map(([name, w], i) => (
            <Tab key={name} $w={w} $first={i === 0} $active={name === 'AugenChart'}>{name}</Tab>
          ))}
        </TabStrip>
        <SplitBar $w={4} />
        <ScrollBtn $w={13}><Triangle d="M6 0L2 4l4 4z" /></ScrollBtn>
        <Thumb $w={197} />
        <HTrack />
        <ScrollBtn $w={14}><Triangle d="M2 0l4 4-4 4z" /></ScrollBtn>
        <SplitBar $w={4} />
        <SplitBar $w={17} />
      </TabRow>

      <BottomDock>
        <Segment $w={593}>
          <GripBox />
          <Tool $w={30}><span>D<u>r</u>aw</span></Tool>
          <Tool $w={8}><DownArrow /></Tool>
          <Tool $w={28}>{icons.pointer}</Tool>
          <Sep />
          <Tool $w={66}><span>A<u>u</u>toShapes</span></Tool>
          <Tool $w={6}><DownArrow /></Tool>
          <Tool $w={27}>{icons.line}</Tool>
          <Tool $w={17}>{icons.arrow}</Tool>
          <Tool $w={27} $pad={4}>{icons.rect}</Tool>
          <Tool $w={23}>{icons.ellipse}</Tool>
          <Tool $w={23}>{icons.textBox}</Tool>
          <Tool $w={23}>{icons.wordArt}</Tool>
          <Tool $w={23}>{icons.diagram}</Tool>
          <Tool $w={23}>{icons.clipArt}</Tool>
          <Tool $w={23}>{icons.picture}</Tool>
          <Sep />
          <Tool $w={26.400} $pad={3.400}>{icons.fill}</Tool>
          <Tool $w={8}><DownArrow /></Tool>
          <Tool $w={26}>{icons.pen}</Tool>
          <Tool $w={9}><DownArrow /></Tool>
          <Tool $w={25}>{icons.fontColor}</Tool>
          <Tool $w={8}><DownArrow /></Tool>
          <Tool $w={25}>{icons.lineStyle}</Tool>
          <Tool $w={23}>{icons.dashStyle}</Tool>
          <Tool $w={23}>{icons.arrowStyle}</Tool>
          <Tool $w={23}>{icons.shadow}</Tool>
          <Tool $w={23}>{icons.cube}</Tool>
          <Spacer />
          <MoreBtn><MoreGlyph /></MoreBtn>
        </Segment>
      </BottomDock>

      <StatusBar>
        <StatusPanel $w={33} />
        <StatusPanel $w={112} />
        <StatusPanel $w={24} />
        <StatusPanel $w={30} />
        <StatusPanel $w={27}>NUM</StatusPanel>
        <StatusPanel $w={29} />
        <StatusPanel $w={25} />
        <StatusPanel $w={19} />
        <SizeGrip width="12" height="12" viewBox="0 0 12 12">
          <path d="M11 1L1 11M11 5l-6 6M11 9l-2 2" stroke="#808080" fill="none" />
          <path d="M12 2L2 12M12 6l-6 6M12 10l-2 2" stroke="#fff" fill="none" />
        </SizeGrip>
      </StatusBar>
    </Frame>
  );
}
